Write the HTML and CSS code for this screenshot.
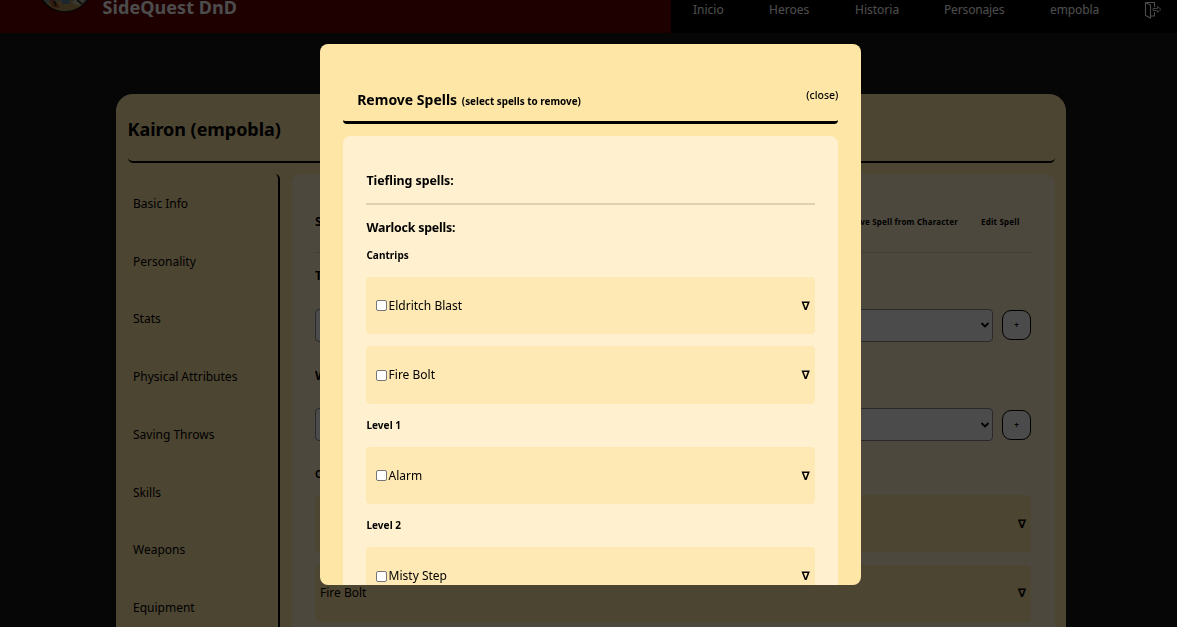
FILE: index.html
```html
<!DOCTYPE html>
<html lang="es">
<head>
<meta charset="utf-8">
<title>SideQuest DnD</title>
<link rel="stylesheet" href="styles.css">
</head>
<body>
<div class="page">
  <header class="topbar">
    <div class="brand">
      <svg class="logo" viewBox="0 0 56 56">
        <defs><clipPath id="disc"><circle cx="28" cy="28" r="27"/></clipPath></defs>
        <g clip-path="url(#disc)">
          <rect width="56" height="56" fill="#7c8d91"/>
          <path d="M0 48q28-9 56 0v8H0z" fill="#b39455"/>
          <path d="M12 42l7 2 4 7-8-1z" fill="#a35831"/>
          <path d="M25 40h6l2 7h-8z" fill="#5c8199"/>
          <path d="M35 46l4-5 8 2-4 6z" fill="#c8c0a8"/>
          <path d="M40 43l5 4M17 44l2 5" stroke="#322d28" stroke-width="2"/>
        </g>
        <circle cx="28" cy="28" r="27" fill="none" stroke="#191510" stroke-width="1.5"/>
      </svg>
      <span class="brand-name">SideQuest DnD</span>
    </div>
    <nav class="nav">
      <a class="nav-inicio">Inicio</a><a class="nav-heroes">Heroes</a><a class="nav-historia">Historia</a><a class="nav-personajes">Personajes</a><a class="nav-user">empobla</a>
      <svg class="logout" viewBox="0 0 18 18" fill="none" stroke="#fff" stroke-width="1.1"><path d="M1.500 1.500h9v4.500M10.500 11v4H7M1.500 1.500v13l5 2.500V4L1.500 1.500"/><path d="M9 7.500h4.500V5.500l3.500 3-3.500 3v-2H9z" stroke-width=".8"/></svg>
    </nav>
  </header>
  <main class="sheet">
    <h1 class="sheet-title">Kairon (empobla)</h1>
    <div class="sheet-body">
      <aside class="side">
        <a>Basic Info</a><a>Personality</a><a>Stats</a><a>Physical Attributes</a><a>Saving Throws</a><a>Skills</a><a>Weapons</a><a>Equipment</a>
      </aside>
      <section class="spells">
        <div class="spells-head"><h2 class="heading">Spells</h2><span class="action remove">Remove Spell from Character</span><span class="action">Edit Spell</span></div>
        <h3 class="heading race">Tiefling spells:</h3>
        <div class="picker"><div class="select"><span>-</span><svg viewBox="0 0 10 6"><path d="M1.500 1L5 4.500 8.500 1"/></svg></div><button class="add">+</button></div>
        <h3 class="heading class-name">Warlock spells:</h3>
        <div class="picker"><div class="select"><span>-</span><svg viewBox="0 0 10 6"><path d="M1.500 1L5 4.500 8.500 1"/></svg></div><button class="add">+</button></div>
        <h4 class="level sheet-level">Cantrips</h4>
        <div class="spell"><span>Eldritch Blast</span><b class="nabla">∇</b></div>
        <div class="spell"><span>Fire Bolt</span><b class="nabla">∇</b></div>
      </section>
    </div>
  </main>
</div>
<div class="overlay">
  <div class="modal">
    <div class="modal-head">
      <h2 class="modal-title">Remove Spells <small>(select spells to remove)</small></h2>
      <a class="close">(close)</a>
    </div>
    <div class="modal-body">
      <h3 class="heading m-race">Tiefling spells:</h3>
      <h3 class="heading m-class">Warlock spells:</h3>
      <h4 class="level first-level">Cantrips</h4>
      <label class="option"><i class="check"></i><span>Eldritch Blast</span><b class="nabla">∇</b></label>
      <label class="option"><i class="check"></i><span>Fire Bolt</span><b class="nabla">∇</b></label>
      <h4 class="level">Level 1</h4>
      <label class="option"><i class="check"></i><span>Alarm</span><b class="nabla">∇</b></label>
      <h4 class="level">Level 2</h4>
      <label class="option"><i class="check"></i><span>Misty Step</span><b class="nabla">∇</b></label>
    </div>
  </div>
</div>
</body>
</html>
```

FILE: styles.css
```css
* { box-sizing: border-box; }
body { margin: 0; background: #141414; color: #000; font: 12px/18px "Noto Sans", "Open Sans", sans-serif; overflow: hidden; }
h1, h2, h3, h4 { margin: 0; }
.page { height: 627px; overflow: hidden; }

.topbar { display: flex; height: 33px; overflow: hidden; }
.brand { display: flex; width: 671px; background: #640000; padding-left: 37px; color: #fff; }
.logo { width: 56px; height: 56px; margin-top: -43px; flex: none; }
.brand-name { margin: -5px 0 0 9.5px; font-weight: 700; font-size: 18px; line-height: 24px; letter-spacing: .07px; }
.nav { display: flex; flex: 1; background: #000; color: #fff; padding-left: 22px; line-height: 19px; }
.nav-inicio { width: 76px; }
.nav-heroes { width: 86px; }
.nav-historia { width: 89px; }
.nav-personajes { width: 106px; letter-spacing: -.15px; }
.nav-user { width: 94px; letter-spacing: -.1px; }
.logout { width: 18px; height: 18px; margin-top: 1px; flex: none; }

.sheet { width: 950px; height: 640px; margin: 61px 0 0 116px; padding: 0 11.5px 0 11.5px; background: #fee6a7; border-radius: 17px; }
.sheet-title { height: 69px; line-height: 71px; font-size: 18px; letter-spacing: -.05px; border-bottom: 2px solid #000; border-radius: 5px; }
.sheet-body { display: flex; gap: 12px; padding-top: 11px; }
.side { display: flex; flex-direction: column; width: 152.5px; height: 600px; padding: 1px 0 0 5.5px; border-right: 2px solid #000; border-radius: 5px; }
.side a { height: 57.72px; line-height: 58px; flex: none; }
.spells { flex: 1; height: 600px; background: #fff1cf; border-radius: 9px; padding: 0 23.5px 0 23px; }
.heading { font-size: 12.4px; line-height: 18px; font-weight: 700; letter-spacing: -.05px; }
.spells-head { display: flex; align-items: center; height: 79px; padding: 17px 11.5px 0 0; border-bottom: 1px solid #dccfae; }
.action { font-size: 8px; font-weight: 700; letter-spacing: .2px; }
.remove { margin: 0 23px 0 auto; }
.race { padding-top: 14px; height: 55.5px; }
.picker { display: flex; align-items: center; gap: 9px; height: 33px; }
.select { display: flex; align-items: center; justify-content: space-between; flex: 1; height: 33px; background: #fafafa; border: 1px solid #8c8c8c; border-radius: 4px; padding: 0 2px 0 4px; }
.select svg { width: 10px; height: 6px; fill: none; stroke: #000; stroke-width: 1.8; }
.add { width: 29px; height: 30px; padding: 0; font: bold 8px/28px "Noto Sans", sans-serif; background: #fafafa; border: 1px solid #000; border-radius: 9px; }
.class-name { height: 66.5px; padding-top: 25.5px; }
.level { font-size: 10px; line-height: 42px; height: 43px; font-weight: 700; letter-spacing: .05px; }
.sheet-level { height: 54.3px; line-height: 66px; }
.spell { display: flex; align-items: center; justify-content: space-between; height: 57px; margin-bottom: 12.5px; padding: 0 5px 0 5px; background: #fee6a7; border-radius: 4px; }
.nabla { font: bold 12px/18px "DejaVu Sans", sans-serif; }

.overlay { position: fixed; inset: 0; padding: 44px 0 0 320.4px; background: rgba(0, 0, 0, .7); }
.modal { width: 541px; height: 541px; padding: 0 23px; background: #fee6a7; border-radius: 8px; overflow: hidden; }
.modal-head { display: flex; justify-content: space-between; height: 80px; border-bottom: 3px solid #000; border-radius: 4px; }
.modal-title { padding: 45px 0 0 13.8px; font-size: 14px; line-height: 22px; }
.modal-title small { margin-left: 1px; font-size: 9.9px; }
.close { padding-top: 42px; font-size: 10.5px; font-weight: 500; }
.modal-body { height: 560px; margin-top: 12px; padding: 36px 23px 0; background: #fff1cf; border-radius: 8px; }
.m-race { height: 33px; border-bottom: 2px solid #dfd2b3; }
.m-class { height: 29px; padding-top: 14px; letter-spacing: -.2px; }
.first-level { line-height: 43px; height: 42.9px; }
.option { display: flex; align-items: center; height: 57.5px; padding: 0 5.5px 0 9.2px; background: #fee8b3; border-radius: 4px; }
.option + .option { margin-top: 12px; }
.option .nabla { margin-left: auto; }
.check { width: 11px; height: 11px; margin-right: 2px; background: #fff; border: 1px solid #767676; border-radius: 2px; }
```
